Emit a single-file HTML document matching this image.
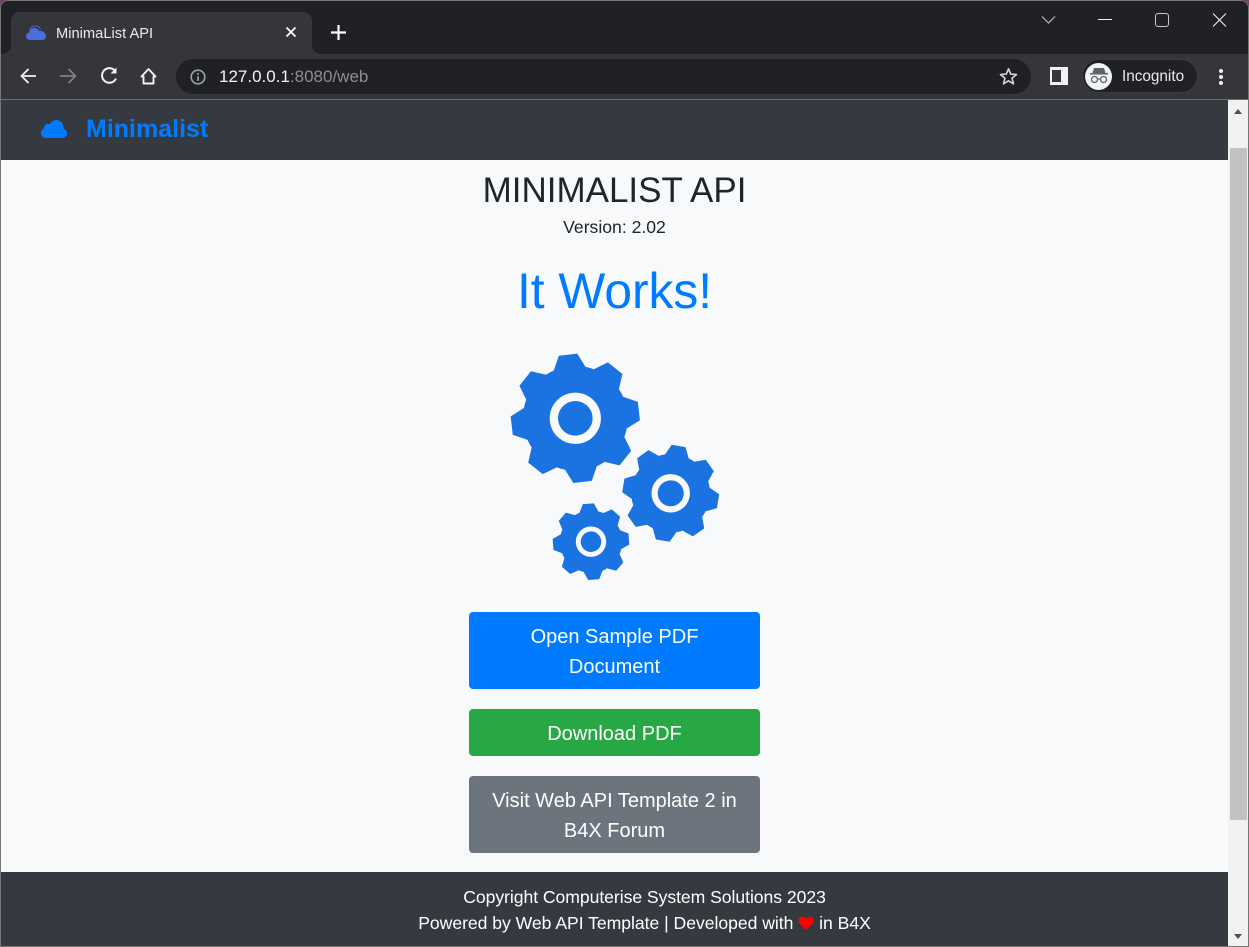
<!DOCTYPE html>
<html><head><meta charset="utf-8"><title>MinimaList API</title>
<style>
*{box-sizing:border-box}
html,body{margin:0;padding:0;width:1249px;height:947px;overflow:hidden;background:#5f5a60;font-family:"Liberation Sans",sans-serif}
.abs,.t{position:absolute}
.t{white-space:nowrap;line-height:1}
.c{left:0;width:1229px;text-align:center}
#win{position:absolute;left:0;top:0;width:1249px;height:947px;border-radius:8px 8px 0 0;overflow:hidden;background:#202124}
.btn{position:absolute;left:469px;width:291px;border-radius:4px;color:#fff;font-size:20px;line-height:30px;text-align:center;padding:10px 12px 0}
</style></head><body>
<div class="abs" style="left:0;top:0;width:1249px;height:2px;background:#7a3f78"></div>
<div id="win">
<!-- tab strip -->
<div class="abs" style="left:11px;top:12px;width:301px;height:42px;background:#35363a;border-radius:9px 9px 0 0"></div>
<div class="abs" style="left:1px;top:44px;width:10px;height:10px;background:#35363a"></div>
<div class="abs" style="left:1px;top:44px;width:10px;height:10px;background:#202124;border-radius:0 0 9px 0"></div>
<div class="abs" style="left:312px;top:44px;width:10px;height:10px;background:#35363a"></div>
<div class="abs" style="left:312px;top:44px;width:10px;height:10px;background:#202124;border-radius:0 0 0 9px"></div>
<svg class="abs" style="left:26px;top:25px" width="20" height="16" viewBox="0 0 20 16"><path d="M4 15C1.500 15 0 13.400 0 11.300C0 9.300 1.500 8 3.200 7.700C3.600 5 5.800 3 8.500 3C10.500 3 12.200 4 13.100 5.700C16.500 5.300 19.800 7.800 20 11.500C20 13.600 18.500 15 16.500 15Z" fill="#4a6fdc"/><path d="M3.500 5.500C4.500 2.500 7 1 9.500 1C11.500 1 13.500 2 14.500 4" fill="none" stroke="#4a6fdc" stroke-width="1"/></svg>
<div class="t" style="left:56px;top:27px;font-size:14.700px;color:#e8eaed">MinimaList API</div>
<svg class="abs" style="left:285px;top:26px" width="12" height="12" viewBox="0 0 12 12"><path d="M1.500 1.500L10.500 10.500M10.500 1.500L1.500 10.500" stroke="#fff" stroke-width="1.800"/></svg>
<svg class="abs" style="left:331px;top:25px" width="15" height="15" viewBox="0 0 15 15"><path d="M7.500 0V15M0 7.500H15" stroke="#fff" stroke-width="2.200"/></svg>
<!-- window controls -->
<svg class="abs" style="left:1041px;top:15px" width="15" height="10" viewBox="0 0 15 10"><path d="M1 1.500L7.500 8L14 1.500" fill="none" stroke="#c8c9cb" stroke-width="1"/></svg>
<div class="abs" style="left:1098px;top:19px;width:14px;height:1px;background:#f0f0f0"></div>
<div class="abs" style="left:1155px;top:13px;width:14px;height:14px;border:1.300px solid #c8c9cb;border-radius:3px"></div>
<svg class="abs" style="left:1212px;top:13px" width="15" height="14" viewBox="0 0 15 14"><path d="M1 .5L14 13.500M14 .5L1 13.500" stroke="#f0f0f0" stroke-width="1.100"/></svg>
<!-- toolbar -->
<div class="abs" style="left:1px;top:54px;width:1247px;height:45px;background:#35363a"></div>
<div class="abs" style="left:1px;top:99px;width:1247px;height:1px;background:#6e6f72"></div>
<svg class="abs" style="left:19px;top:66px" width="140" height="20" viewBox="0 0 140 20">
<path d="M17 10H2.500M9.500 3L2.500 10L9.500 17" fill="none" stroke="#f1f3f4" stroke-width="1.800"/>
<path d="M41 10H56.500M49.500 3L56.500 10L49.500 17" fill="none" stroke="#7d7f82" stroke-width="1.800"/>
<path d="M96.500 5.500A7.300 7.300 0 1 0 97 12.500" fill="none" stroke="#f1f3f4" stroke-width="2"/><path d="M97.500 1.500V7.500H91.500Z" fill="#f1f3f4"/>
<path d="M122.500 10.500L129.500 3L136.500 10.500H134.500V17.500H124.500V10.500Z" fill="none" stroke="#f1f3f4" stroke-width="1.900" stroke-linejoin="round"/>
</svg>
<div class="abs" style="left:176px;top:59px;width:855px;height:35px;border-radius:18px;background:#202124"></div>
<svg class="abs" style="left:190px;top:69px" width="17" height="17" viewBox="0 0 17 17"><circle cx="8" cy="8" r="6.800" fill="none" stroke="#9aa0a6" stroke-width="1.700"/><path d="M8 7.200V12M8 4V5.800" stroke="#9aa0a6" stroke-width="1.700"/></svg>
<div class="t" style="left:219px;top:68px;font-size:17px;color:#f1f3f4">127.0.0.1<span style="color:#8b8d90">:8080/web</span></div>
<svg class="abs" style="left:999px;top:67px" width="19" height="19" viewBox="0 0 19 19"><path d="M9.500 1.800L11.700 7.100L17.500 7.500L13 11.200L14.500 16.800L9.500 13.800L4.500 16.800L6 11.200L1.500 7.500L7.300 7.100Z" fill="none" stroke="#d4d5d7" stroke-width="1.600" stroke-linejoin="round"/></svg>
<div class="abs" style="left:1050px;top:67px;width:18px;height:18px;background:#f1f3f4"></div>
<div class="abs" style="left:1052px;top:70px;width:9px;height:12px;background:#35363a"></div>
<div class="abs" style="left:1082px;top:59px;width:116px;height:34px;border-radius:17px;background:#202124;border:1px solid #3c3d41"></div>
<div class="abs" style="left:1085px;top:63px;width:27px;height:27px;border-radius:50%;background:#f1f3f4"></div>
<svg class="abs" style="left:1089px;top:67px" width="20" height="19" viewBox="0 0 20 19"><path d="M5 1H15L16.500 6H19V7.500H1V6H3.500Z" fill="#5f6368"/><circle cx="5.500" cy="12.500" r="3" fill="none" stroke="#5f6368" stroke-width="1.300"/><circle cx="14.500" cy="12.500" r="3" fill="none" stroke="#5f6368" stroke-width="1.300"/><path d="M8.500 12H11.500" stroke="#5f6368" stroke-width="1.200"/></svg>
<div class="t" style="left:1122px;top:69px;font-size:15.300px;color:#e8eaed">Incognito</div>
<div class="abs" style="left:1219px;top:69px;width:4px;height:4px;border-radius:50%;background:#f1f3f4"></div>
<div class="abs" style="left:1219px;top:75px;width:4px;height:4px;border-radius:50%;background:#f1f3f4"></div>
<div class="abs" style="left:1219px;top:81px;width:4px;height:4px;border-radius:50%;background:#f1f3f4"></div>
<!-- page -->
<div class="abs" style="left:1px;top:100px;width:1227px;height:846px;background:#f8f9fa"></div>
<div class="abs" style="left:1px;top:100px;width:1227px;height:60px;background:#343a40"></div>
<svg class="abs" style="left:41px;top:120px" width="26" height="18" viewBox="0 0 26 18"><path d="M5 18C2.200 18 0 15.800 0 13C0 10.800 1.400 9 3.300 8.300C3.300 8 3.200 7.700 3.200 7.400C3.200 5.400 4.800 3.800 6.800 3.800C7.600 3.800 8.300 4 8.900 4.500C10 1.900 12.500 0 15.400 0C19.300 0 22.300 3.100 22.300 7C22.300 7.400 22.300 7.800 22.200 8.200C24.400 9 26 11 26 13.400C26 16 23.900 18 21.300 18Z" fill="#007bff"/></svg>
<div class="t" style="left:86px;top:117px;font-size:25px;font-weight:700;color:#007bff">Minimalist</div>
<div class="t c" style="top:173px;font-size:35px;color:#212529">MINIMALIST API</div>
<div class="t c" style="top:219px;font-size:17.600px;color:#212529">Version: 2.02</div>
<div class="t c" style="top:267px;font-size:49.700px;color:#007bff">It Works!</div>
<svg class="abs" style="left:500px;top:345px" width="230" height="240" viewBox="500 345 230 240">
<defs>
<polygon id="tooth" points="-25,-78 -14.500,-100 14.500,-100 25,-78" fill="#1a73e0"/>
<g id="gear"><circle r="82" fill="#1a73e0"/>
<use href="#tooth" transform="rotate(0)"/><use href="#tooth" transform="rotate(45)"/><use href="#tooth" transform="rotate(90)"/><use href="#tooth" transform="rotate(135)"/><use href="#tooth" transform="rotate(180)"/><use href="#tooth" transform="rotate(225)"/><use href="#tooth" transform="rotate(270)"/><use href="#tooth" transform="rotate(315)"/>
<circle r="33.500" fill="none" stroke="#f8f9fa" stroke-width="13"/></g>
</defs>
<use href="#gear" transform="translate(575.300 418.300) scale(.64) rotate(-6.500)"/>
<use href="#gear" transform="translate(670.700 493.300) scale(.48) rotate(9.500)"/>
<use href="#gear" transform="translate(591 541.700) scale(.38) rotate(-4)"/>
</svg>
<div class="btn" style="top:612px;height:77px;background:#007bff">Open Sample PDF<br>Document</div>
<div class="btn" style="top:709px;height:47px;background:#28a745">Download PDF</div>
<div class="btn" style="top:776px;height:77px;background:#6c757d">Visit Web API Template 2 in<br>B4X Forum</div>
<div class="abs" style="left:1px;top:872px;width:1227px;height:74px;background:#343a40"></div>
<div class="t c" style="top:889px;left:30px;font-size:17.600px;color:#fff;letter-spacing:-.05px">Copyright Computerise System Solutions 2023</div>
<div class="t c" style="top:915px;left:30px;font-size:17.600px;color:#fff;letter-spacing:-.03px">Powered by Web API Template | Developed with <svg width="16" height="14" viewBox="0 0 16 14" style="vertical-align:-1px"><path d="M8 14L1.500 7.500C-.5 5 .5 1 4 .5C6 .3 7.300 1.500 8 3C8.700 1.500 10 .3 12 .5C15.500 1 16.500 5 14.500 7.500Z" fill="#f00"/></svg> in B4X</div>
<!-- scrollbar -->
<div class="abs" style="left:1228px;top:100px;width:20px;height:846px;background:#f1f1f1"></div>
<div class="abs" style="left:1230px;top:148px;width:17px;height:672px;background:#c1c1c1"></div>
<div class="abs" style="left:1234px;top:109px;width:0;height:0;border-left:4.500px solid transparent;border-right:4.500px solid transparent;border-bottom:5px solid #505050"></div>
<div class="abs" style="left:1234px;top:934px;width:0;height:0;border-left:4.500px solid transparent;border-right:4.500px solid transparent;border-top:5px solid #505050"></div>
<div class="abs" style="left:0;top:0;width:1249px;height:947px;border:1px solid #77777a;border-radius:8px 8px 0 0;pointer-events:none"></div>
</div>
</body></html>
